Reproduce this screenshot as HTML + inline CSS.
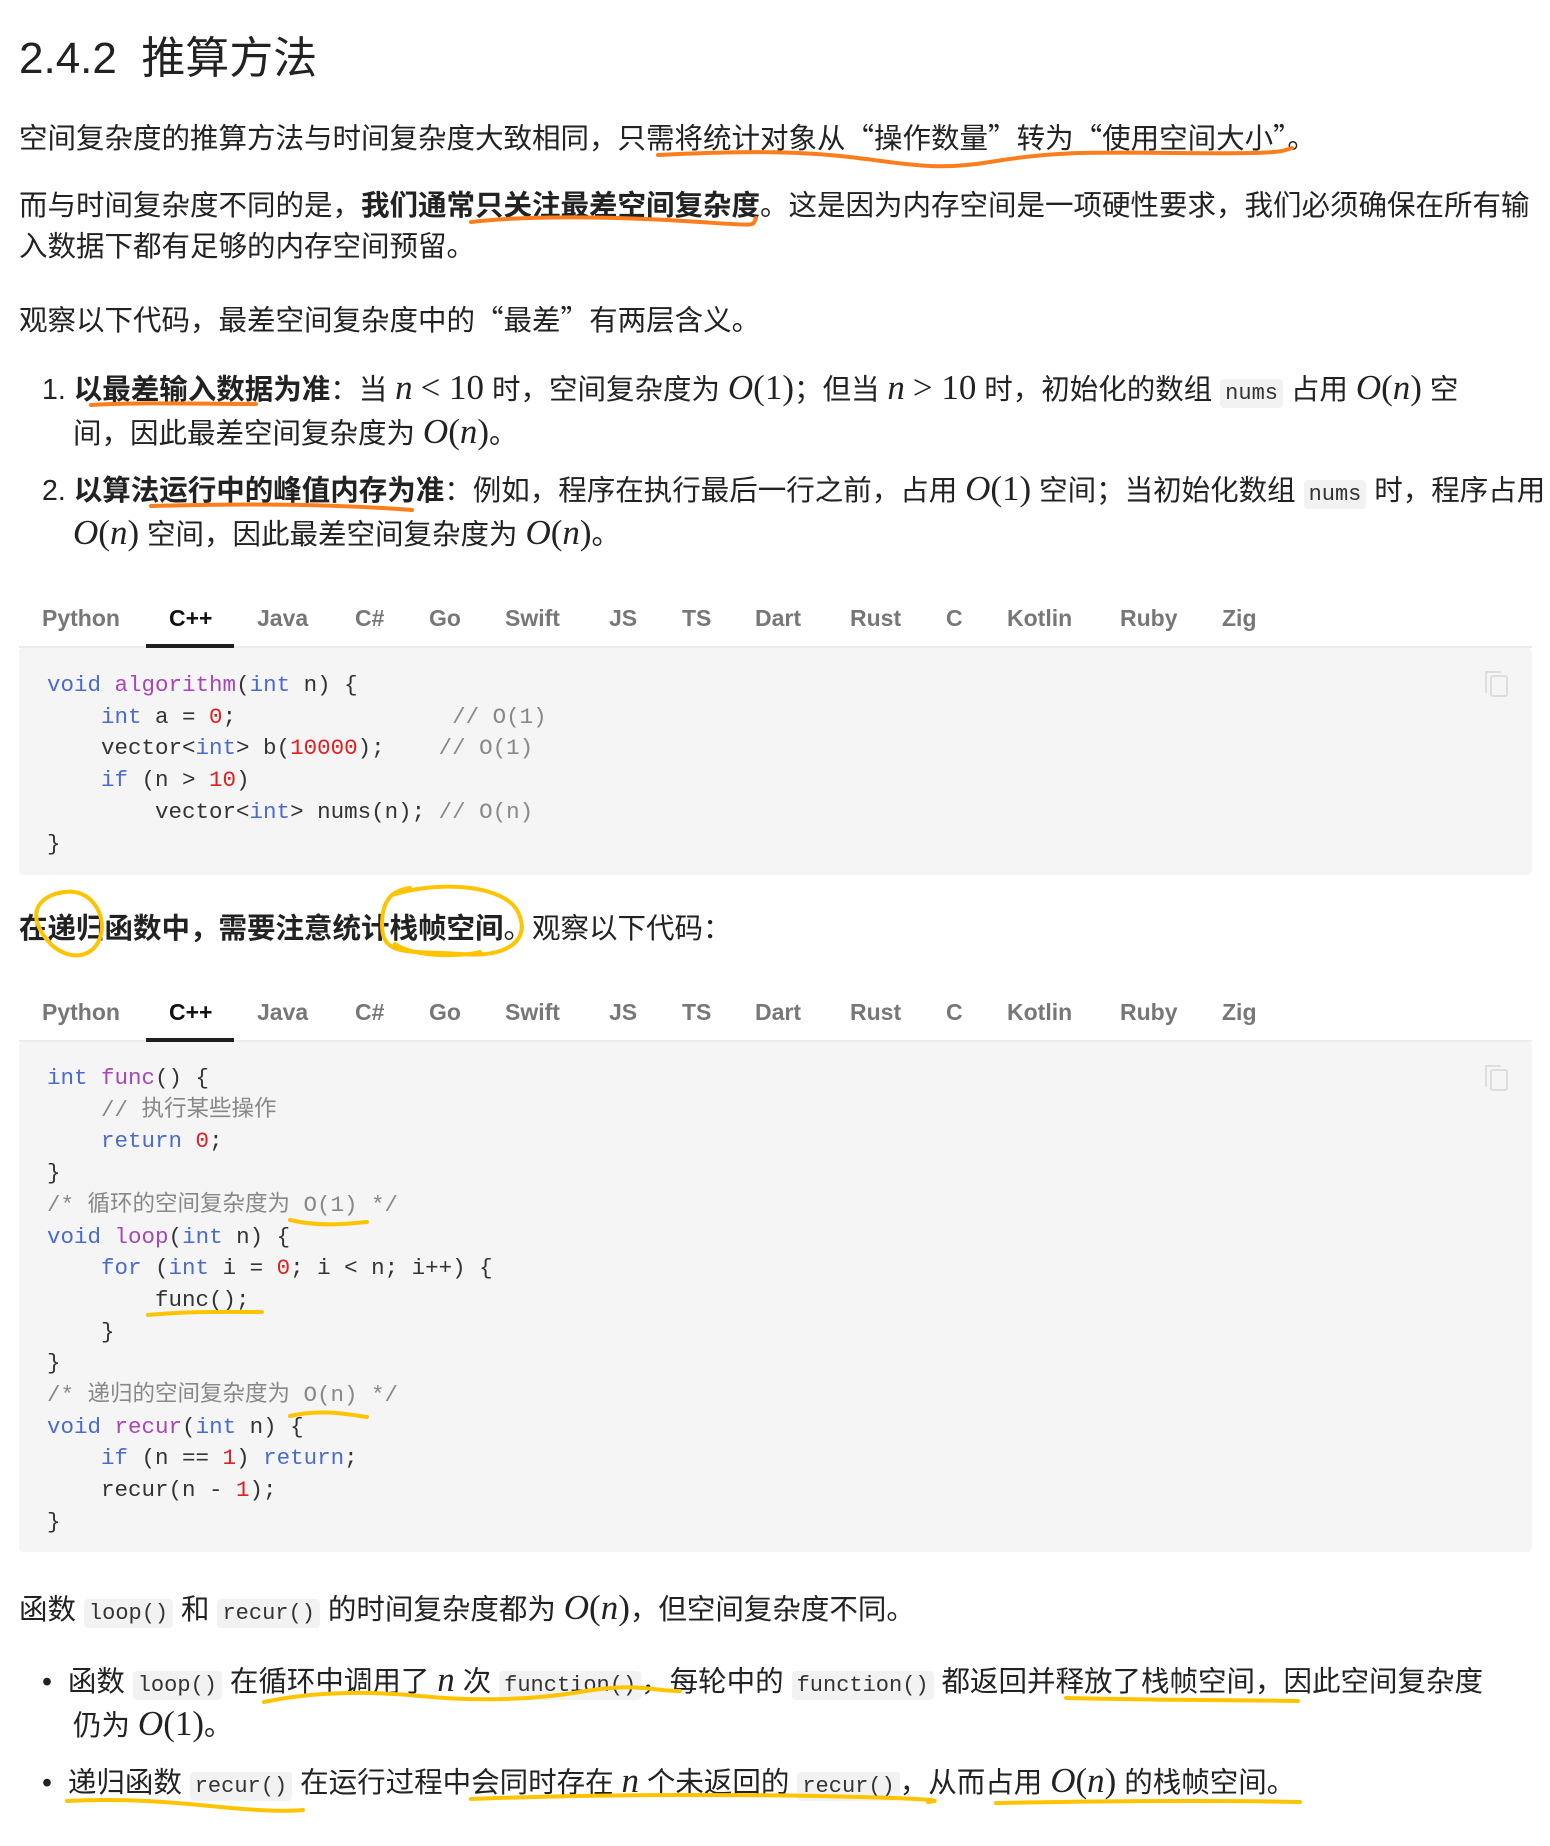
<!DOCTYPE html>
<html><head><meta charset="utf-8"><style>
body{margin:0;width:1550px;height:1846px;position:relative;background:#fff;font-family:"Liberation Sans","Noto Sans CJK SC",sans-serif;color:#222;overflow:hidden}
.l{position:absolute;white-space:pre;font-size:28.5px;line-height:42px;height:42px}
.q{font-family:"Noto Sans CJK SC",sans-serif}
.m{font-family:"Liberation Serif",serif;font-style:italic;font-size:35px}
.r{font-family:"Liberation Serif",serif;font-style:normal;font-size:35px}
code{font-family:"Liberation Mono","Noto Sans CJK SC",monospace;font-size:22px;background:#f2f2f2;border-radius:4px;padding:2px 5px;color:#333}
b{font-weight:700}
.tab{position:absolute;font-size:23px;font-weight:700;color:#777;line-height:30px}
.blk{position:absolute;left:19px;width:1513px;background:#f5f5f5;border-radius:4px}
.bar{position:absolute;left:19px;width:1513px;height:2px;background:#ececec}
.ul{position:absolute;left:146px;width:88px;height:4px;background:#1f1f1f}
.c{position:absolute;left:47px;white-space:pre;font-family:"Liberation Mono","Noto Sans CJK SC",monospace;font-size:22.5px;line-height:32px;color:#333}
.k{color:#4a6bc9}.f{color:#a846b9}.n{color:#e02020}.g{color:#888}
</style></head><body>
<div class="l" style="left:19px;top:26px;font-size:44px;line-height:56px;height:56px;color:#222">2.4.2&nbsp; <span class="q">推算方法</span></div>
<div class="l" style="left:19px;top:116px">空间复杂度的推算方法与时间复杂度大致相同，只需将统计对象从<span class="q">“</span>操作数量<span class="q">”</span>转为<span class="q">“</span>使用空间大小<span class="q">”</span>。</div>
<div class="l" style="left:19px;top:185px">而与时间复杂度不同的是，<b>我们通常只关注最差空间复杂度</b>。这是因为内存空间是一项硬性要求，我们必须确保在所有输</div>
<div class="l" style="left:19px;top:226px">入数据下都有足够的内存空间预留。</div>
<div class="l" style="left:19px;top:298px">观察以下代码，最差空间复杂度中的<span class="q">“</span>最差<span class="q">”</span>有两层含义。</div>
<div class="l" style="left:42px;top:367px">1. <b>以最差输入数据为准</b>：当 <span class="m">n</span> <span class="r">&lt; 10</span> 时，空间复杂度为 <span class="m">O</span><span class="r">(1)</span>；但当 <span class="m">n</span> <span class="r">&gt; 10</span> 时，初始化的数组 <code>nums</code> 占用 <span class="m">O</span><span class="r">(</span><span class="m">n</span><span class="r">)</span> 空</div>
<div class="l" style="left:73px;top:411px">间，因此最差空间复杂度为 <span class="m">O</span><span class="r">(</span><span class="m">n</span><span class="r">)</span>。</div>
<div class="l" style="left:42px;top:468px">2. <b>以算法运行中的峰值内存为准</b>：例如，程序在执行最后一行之前，占用 <span class="m">O</span><span class="r">(1)</span> 空间；当初始化数组 <code>nums</code> 时，程序占用</div>
<div class="l" style="left:73px;top:512px"><span class="m">O</span><span class="r">(</span><span class="m">n</span><span class="r">)</span> 空间，因此最差空间复杂度为 <span class="m">O</span><span class="r">(</span><span class="m">n</span><span class="r">)</span>。</div>

<div class="tab" style="left:42px;top:603px">Python</div><div class="tab" style="left:169px;top:603px;color:#111">C++</div><div class="tab" style="left:257px;top:603px">Java</div><div class="tab" style="left:355px;top:603px">C#</div><div class="tab" style="left:429px;top:603px">Go</div><div class="tab" style="left:505px;top:603px">Swift</div><div class="tab" style="left:609px;top:603px">JS</div><div class="tab" style="left:682px;top:603px">TS</div><div class="tab" style="left:755px;top:603px">Dart</div><div class="tab" style="left:850px;top:603px">Rust</div><div class="tab" style="left:946px;top:603px">C</div><div class="tab" style="left:1007px;top:603px">Kotlin</div><div class="tab" style="left:1120px;top:603px">Ruby</div><div class="tab" style="left:1222px;top:603px">Zig</div>
<div class="bar" style="top:646px"></div><div class="ul" style="top:644px"></div>
<div class="blk" style="top:648px;height:227px"></div>
<div class="c" style="top:670px;line-height:31.7px"><span class="k">void</span> <span class="f">algorithm</span>(<span class="k">int</span> n) {
    <span class="k">int</span> a = <span class="n">0</span>;                <span class="g">// O(1)</span>
    vector&lt;<span class="k">int</span>&gt; b(<span class="n">10000</span>);    <span class="g">// O(1)</span>
    <span class="k">if</span> (n &gt; <span class="n">10</span>)
        vector&lt;<span class="k">int</span>&gt; nums(n); <span class="g">// O(n)</span>
}</div>

<div class="l" style="left:19px;top:908px"><b>在递归函数中，需要注意统计栈帧空间</b>。观察以下代码：</div>

<div class="tab" style="left:42px;top:997px">Python</div><div class="tab" style="left:169px;top:997px;color:#111">C++</div><div class="tab" style="left:257px;top:997px">Java</div><div class="tab" style="left:355px;top:997px">C#</div><div class="tab" style="left:429px;top:997px">Go</div><div class="tab" style="left:505px;top:997px">Swift</div><div class="tab" style="left:609px;top:997px">JS</div><div class="tab" style="left:682px;top:997px">TS</div><div class="tab" style="left:755px;top:997px">Dart</div><div class="tab" style="left:850px;top:997px">Rust</div><div class="tab" style="left:946px;top:997px">C</div><div class="tab" style="left:1007px;top:997px">Kotlin</div><div class="tab" style="left:1120px;top:997px">Ruby</div><div class="tab" style="left:1222px;top:997px">Zig</div>
<div class="bar" style="top:1040px"></div><div class="ul" style="top:1038px"></div>
<div class="blk" style="top:1042px;height:510px"></div>
<div class="c" style="top:1063px;line-height:31.7px"><span class="k">int</span> <span class="f">func</span>() {
    <span class="g">// 执行某些操作</span>
    <span class="k">return</span> <span class="n">0</span>;
}
<span class="g">/* 循环的空间复杂度为 O(1) */</span>
<span class="k">void</span> <span class="f">loop</span>(<span class="k">int</span> n) {
    <span class="k">for</span> (<span class="k">int</span> i = <span class="n">0</span>; i &lt; n; i++) {
        func();
    }
}
<span class="g">/* 递归的空间复杂度为 O(n) */</span>
<span class="k">void</span> <span class="f">recur</span>(<span class="k">int</span> n) {
    <span class="k">if</span> (n == <span class="n">1</span>) <span class="k">return</span>;
    recur(n - <span class="n">1</span>);
}</div>

<div class="l" style="left:19px;top:1587px">函数 <code>loop()</code> 和 <code>recur()</code> 的时间复杂度都为 <span class="m">O</span><span class="r">(</span><span class="m">n</span><span class="r">)</span>，但空间复杂度不同。</div>
<div class="l" style="left:42px;top:1659px">•&nbsp; 函数 <code>loop()</code> 在循环中调用了 <span class="m">n</span> 次 <code>function()</code>，每轮中的 <code>function()</code> 都返回并释放了栈帧空间，因此空间复杂度</div>
<div class="l" style="left:73px;top:1703px">仍为 <span class="m">O</span><span class="r">(1)</span>。</div>
<div class="l" style="left:42px;top:1760px">•&nbsp; 递归函数 <code>recur()</code> 在运行过程中会同时存在 <span class="m">n</span> 个未返回的 <code>recur()</code>，从而占用 <span class="m">O</span><span class="r">(</span><span class="m">n</span><span class="r">)</span> 的栈帧空间。</div>

<svg style="position:absolute;left:0;top:0" width="1550" height="1846" fill="none" stroke-linecap="round">
<rect x="1491" y="676" width="16" height="20" rx="2" stroke="#ddd" stroke-width="2"/>
<path d="M1486 692V672h14" stroke="#ddd" stroke-width="2"/>
<rect x="1491" y="1070" width="16" height="20" rx="2" stroke="#ddd" stroke-width="2"/>
<path d="M1486 1086V1066h14" stroke="#ddd" stroke-width="2"/>
<g stroke="#fb7d1c" stroke-width="4">
<path d="M658 155C720 152 780 150 840 156S930 172 990 162S1080 152 1180 153S1280 152 1292 148"/>
<path d="M471 222C540 214 640 218 700 222S752 226 756 218"/>
<path d="M91 405C140 402 200 404 256 404"/>
<path d="M151 506C230 504 320 503 412 510"/>
</g>
<g stroke="#ffc400" stroke-width="4">
<path d="M60 893C90 885 108 915 100 938S62 962 44 936S42 895 64 892"/>
<path d="M392 895C440 880 505 885 518 912S510 958 460 954S382 958 382 925S400 890 410 888M395 944C420 960 470 955 480 952"/>
<path d="M290 1220C320 1227 345 1224 367 1222"/>
<path d="M148 1315C190 1311 230 1312 262 1312"/>
<path d="M290 1416C320 1409 345 1414 367 1417"/>
<path d="M264 1702C320 1690 380 1692 420 1696S520 1702 580 1692S650 1691 680 1691"/>
<path d="M1066 1698C1150 1700 1230 1700 1298 1701"/>
<path d="M67 1801C120 1798 170 1802 210 1806S280 1812 303 1810"/>
<path d="M471 1799C600 1794 750 1794 860 1797S925 1802 928 1802"/>
<path d="M996 1803C1100 1801 1200 1800 1300 1802"/>
</g>
</svg>
</body></html>
